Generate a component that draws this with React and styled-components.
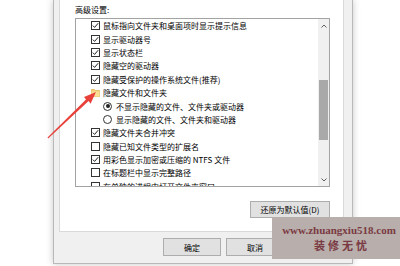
import React from 'react';
import styled, { createGlobalStyle } from 'styled-components';

const GlobalStyle = createGlobalStyle`
  html, body {
    margin: 0;
    padding: 0;
    background: #ffffff;
  }
  body {
    font-family: "Noto Sans CJK SC", "Noto Sans", sans-serif;
  }
`;

const items = [
  { kind: 'check', checked: true, text: '鼠标指向文件夹和桌面项时显示提示信息' },
  { kind: 'check', checked: true, text: '显示驱动器号' },
  { kind: 'check', checked: true, text: '显示状态栏' },
  { kind: 'check', checked: true, text: '隐藏空的驱动器' },
  { kind: 'check', checked: true, text: '隐藏受保护的操作系统文件(推荐)' },
  { kind: 'folder', text: '隐藏文件和文件夹' },
  { kind: 'radio', checked: true, text: '不显示隐藏的文件、文件夹或驱动器' },
  { kind: 'radio', checked: false, text: '显示隐藏的文件、文件夹和驱动器' },
  { kind: 'check', checked: true, text: '隐藏文件夹合并冲突' },
  { kind: 'check', checked: false, text: '隐藏已知文件类型的扩展名' },
  { kind: 'check', checked: true, text: '用彩色显示加密或压缩的 NTFS 文件' },
  { kind: 'check', checked: false, text: '在标题栏中显示完整路径' },
  { kind: 'check', checked: false, text: '在单独的进程中打开文件夹窗口' },
];

const Page = styled.div`
  position: relative;
  width: 400px;
  height: 266px;
  overflow: hidden;
  background: #ffffff;
  display: flex;
  align-items: flex-start;
`;

const Dialog = styled.div`
  margin-left: 53px;
  width: 300px;
  height: 264px;
  box-sizing: border-box;
  background: #f0f0f0;
  border: 1px solid #b9b9b9;
  border-top: none;
  padding: 0 8px 6px 5px;
  box-shadow: 0 0 7px rgba(0, 0, 0, 0.22);
  display: flex;
  flex-direction: column;
`;

const TabPage = styled.div`
  height: 232px;
  box-sizing: border-box;
  background: #ffffff;
  border: 1px solid #d9d9d9;
  border-top: none;
  padding: 4px 13px 0 15px;
  display: flex;
  flex-direction: column;
`;

const Legend = styled.div`
  height: 12px;
  line-height: 12px;
  font-size: 8px;
  color: #000;
`;

const ListBox = styled.div`
  margin-top: 2px;
  height: 169px;
  box-sizing: border-box;
  border: 1px solid #a3a3a3;
  display: flex;
  overflow: hidden;
`;

const Items = styled.div`
  flex: 1;
  overflow: hidden;
`;

const Row = styled.div`
  height: 13.4px;
  display: flex;
  align-items: center;
  gap: ${(p) => (p.$radio ? 4 : 3)}px;
  padding-left: ${(p) => (p.$radio ? 27 : 15)}px;
  font-size: 8px;
  color: #000;
  white-space: nowrap;
`;

const Box = styled.span`
  width: 9px;
  height: 9px;
  box-sizing: border-box;
  border: 1px solid #333;
  background: #fff;
  flex: none;
  display: flex;
  align-items: center;
  justify-content: center;
`;

const Radio = styled.span`
  width: 9px;
  height: 9px;
  box-sizing: border-box;
  border: 1px solid #333;
  border-radius: 50%;
  background: #fff;
  flex: none;
  display: flex;
  align-items: center;
  justify-content: center;

  &::after {
    content: '';
    width: 4px;
    height: 4px;
    border-radius: 50%;
    background: ${(p) => (p.$checked ? '#222' : 'transparent')};
  }
`;

const Scrollbar = styled.div`
  width: 11px;
  flex: none;
  background: #f0f0f0;
  display: flex;
  flex-direction: column;
`;

const ScrollArrow = styled.div`
  height: 13px;
  display: flex;
  align-items: center;
  justify-content: center;
`;

const Track = styled.div`
  flex: 1;
  padding-top: 48px;
`;

const Thumb = styled.div`
  height: 60px;
  margin: 0 1px;
  background: #a9a9a9;
`;

const RestoreRow = styled.div`
  margin-top: 14px;
  display: flex;
  justify-content: flex-end;
`;

const Button = styled.div`
  width: ${(p) => p.$w}px;
  height: ${(p) => p.$h}px;
  box-sizing: border-box;
  background: #e1e1e1;
  border: 1px solid #adadad;
  font-size: 8px;
  color: #000;
  display: flex;
  align-items: center;
  justify-content: center;
`;

const ButtonRow = styled.div`
  margin-top: 6px;
  margin-right: -3px;
  display: flex;
  justify-content: flex-end;
  gap: 5px;
`;

const Watermark = styled.div`
  position: absolute;
  left: 272px;
  top: 217px;
  width: 128px;
  height: 42px;
  background: #b8aeac;
  display: flex;
  flex-direction: column;
  align-items: center;
  justify-content: center;
  color: #7a3a42;
`;

const Site = styled.div`
  font-family: "Liberation Serif", serif;
  font-weight: bold;
  font-size: 11px;
  line-height: 14px;
  margin-left: 6px;
`;

const Slogan = styled.div`
  font-family: "Noto Sans CJK SC", sans-serif;
  font-weight: bold;
  font-size: 11px;
  line-height: 16px;
  letter-spacing: 3px;
  margin-left: 12px;
`;

const ArrowLayer = styled.svg`
  position: absolute;
  left: 0;
  top: 0;
  pointer-events: none;
`;

const Check = () => (
  <svg width="7" height="7" viewBox="0 0 7 7">
    <polyline points="0.8,3.6 2.6,5.4 6.2,1.2" fill="none" stroke="#222" strokeWidth="1" />
  </svg>
);

const Folder = () => (
  <svg width="9" height="9" viewBox="0 0 9 9" style={{ flex: 'none' }}>
    <path d="M0.5 1.5h3l1 1h4v6h-8z" fill="#f4d27a" stroke="#d9a93e" strokeWidth="0.6" />
    <path d="M0.5 3.5h8v5h-8z" fill="#f8df95" />
  </svg>
);

const Chevron = ({ up }) => (
  <svg width="6" height="4" viewBox="0 0 6 4">
    <polyline
      points={up ? '0.5,3.5 3,1 5.5,3.5' : '0.5,0.5 3,3 5.5,0.5'}
      fill="none"
      stroke="#606060"
      strokeWidth="1"
    />
  </svg>
);

const ListItem = ({ item }) => {
  if (item.kind === 'radio') {
    return (
      <Row $radio>
        <Radio $checked={item.checked} />
        {item.text}
      </Row>
    );
  }
  return (
    <Row>
      {item.kind === 'folder' ? <Folder /> : <Box>{item.checked && <Check />}</Box>}
      {item.text}
    </Row>
  );
};

export default function App() {
  return (
    <>
      <GlobalStyle />
      <Page>
        <Dialog>
          <TabPage>
            <Legend>高级设置:</Legend>
            <ListBox>
              <Items>
                {items.map((item, i) => (
                  <ListItem key={i} item={item} />
                ))}
              </Items>
              <Scrollbar>
                <ScrollArrow>
                  <Chevron up />
                </ScrollArrow>
                <Track>
                  <Thumb />
                </Track>
                <ScrollArrow>
                  <Chevron />
                </ScrollArrow>
              </Scrollbar>
            </ListBox>
            <RestoreRow>
              <Button $w={80} $h={17}>还原为默认值(D)</Button>
            </RestoreRow>
          </TabPage>
          <ButtonRow>
            <Button $w={58} $h={18}>确定</Button>
            <Button $w={58} $h={18}>取消</Button>
            <Button $w={58} $h={18} />
          </ButtonRow>
        </Dialog>

        <ArrowLayer width="400" height="266" viewBox="0 0 400 266">
          <polygon
            points="48.2,138.5 88.6,101.1 90.6,103.8 96,92 84,96.9 86,99.5 47.5,137.5"
            fill="#e8413a"
          />
        </ArrowLayer>

        <Watermark>
          <Site>www.zhuangxiu518.com</Site>
          <Slogan>装修无忧</Slogan>
        </Watermark>
      </Page>
    </>
  );
}
